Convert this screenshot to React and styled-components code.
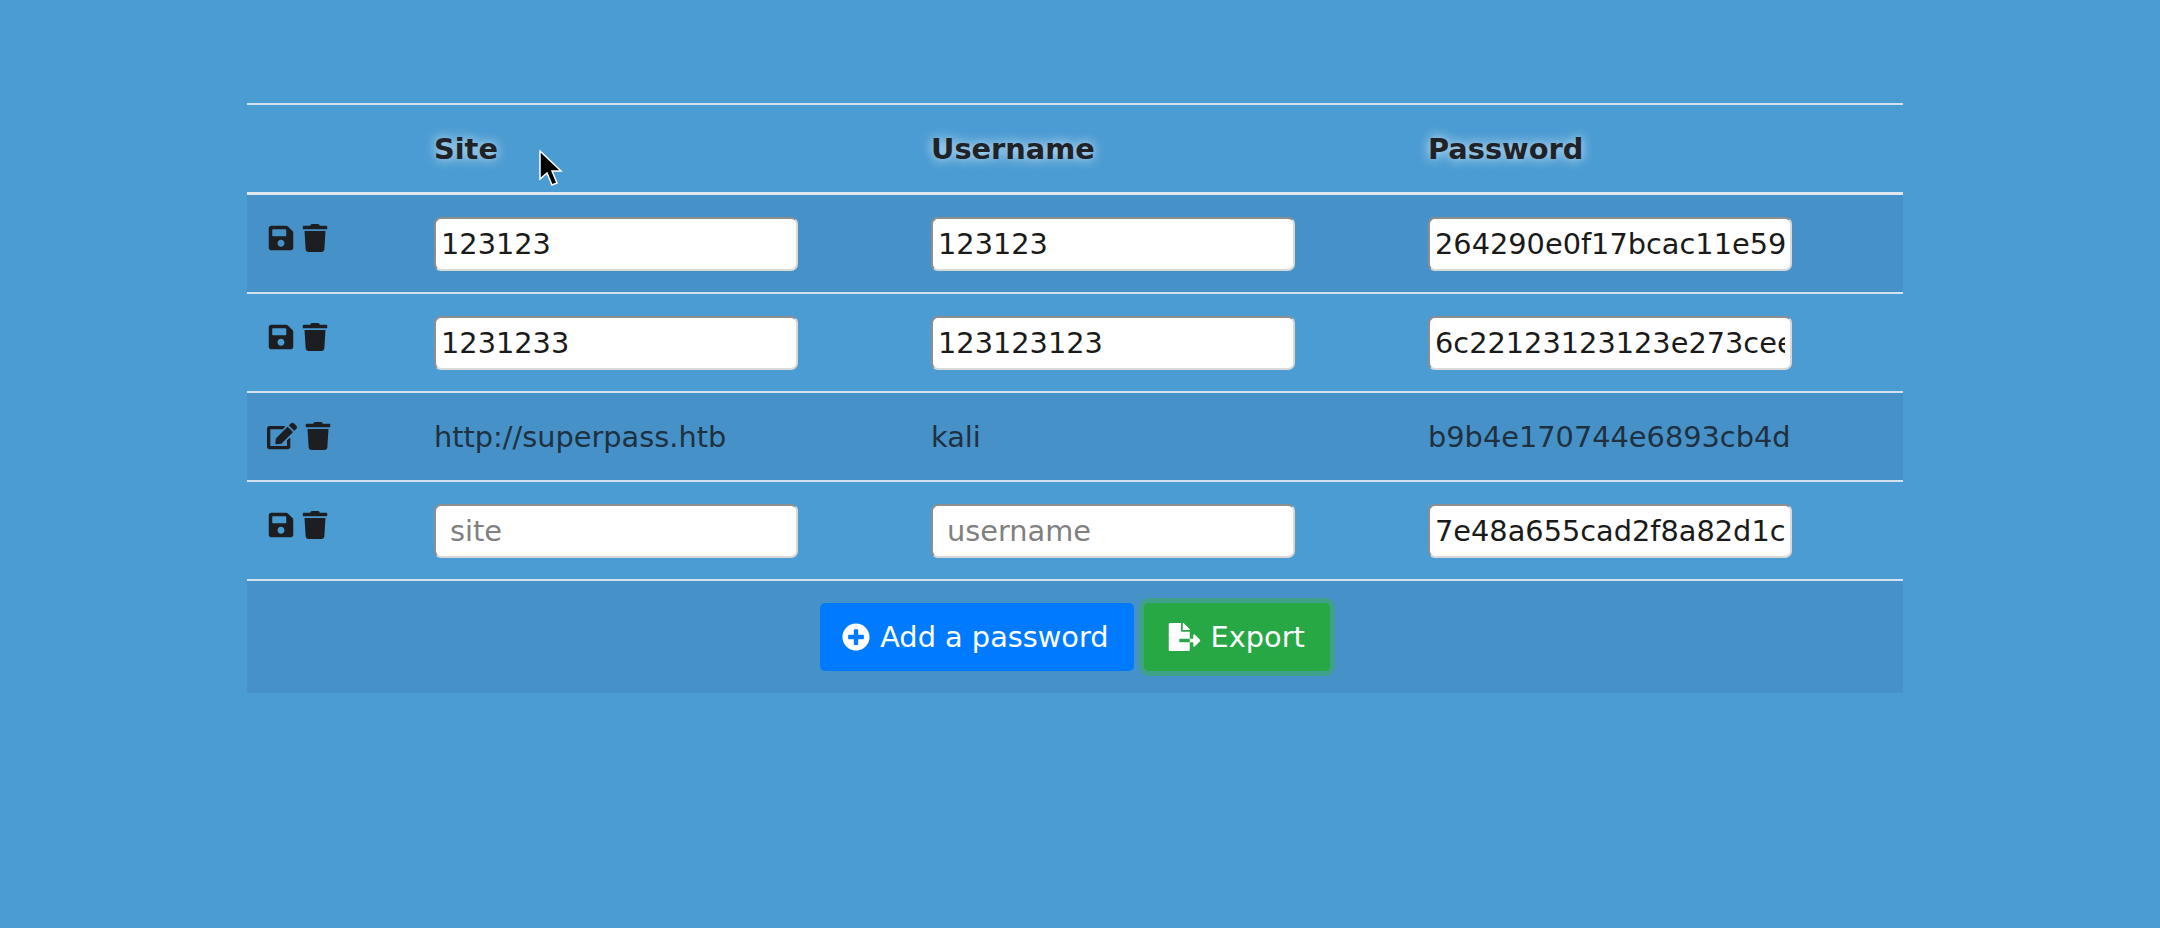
import React from 'react';
import styled, { createGlobalStyle } from 'styled-components';
import { FaSave, FaTrash, FaEdit, FaPlusCircle, FaFileExport } from 'react-icons/fa';

const GlobalStyle = createGlobalStyle`
    html, body {
        margin: 0;
        height: 100%;
        background: #4b9cd3;
    }
    body {
        font-family: "DejaVu Sans", Verdana, sans-serif;
        font-size: 28.8px;
        line-height: 33px;
        color: #212529;
    }
    #root {
        height: 100%;
    }
`;

const Page = styled.div`
    position: relative;
    min-height: 928px;
    padding: 103px 257px 0 247px;
    box-sizing: border-box;
    overflow: hidden;
`;

const Table = styled.table`
    width: 1656px;
    table-layout: fixed;
    border-collapse: collapse;
`;

const HeadCell = styled.th`
    text-align: left;
    font-weight: 700;
    padding: 28px 17px 26px;
    border-top: 2px solid #d3e2ee;
    border-bottom: 3px solid #dee7ee;
    color: #1f2327;
    text-shadow: 0 0 12px rgba(255, 255, 255, 0.85);
`;

const Row = styled.tr`
    background: ${p => (p.$striped ? '#4692c8' : 'transparent')};
`;

const Cell = styled.td`
    vertical-align: top;
    padding: ${p => (p.$editing ? '22px 17px 21px' : '28px 17px 26px')};
    border-top: 2px solid #d3e2ee;
    overflow: hidden;
    white-space: nowrap;
    color: ${p => (p.$editing ? '#212529' : '#1f3040')};
`;

const Actions = styled.td`
    vertical-align: top;
    padding: 29px 20px 0;
    border-top: 2px solid #d3e2ee;
    white-space: nowrap;
`;

const IconRow = styled.div`
    display: flex;
    align-items: flex-start;
    gap: 6px;
    font-size: 0;
    color: #1c1e21;

    svg {
        display: block;
        width: ${p => (p.$edit ? '30px' : '28px')};
        height: 28px;
    }
`;

const TextInput = styled.input`
    display: block;
    box-sizing: border-box;
    width: 364px;
    height: 54px;
    padding: 0 ${p => (p.$empty ? '14px' : '5px')};
    font-family: inherit;
    font-size: 28.8px;
    color: #1a1a1a;
    background: #fff;
    border: 2px solid #d9d9d9;
    border-top-color: #8e8e8e;
    border-left-color: #8e8e8e;
    border-radius: 7px;
    outline: none;

    &::placeholder {
        color: #808080;
        opacity: 1;
    }
`;

const FooterCell = styled.td`
    padding: 22px 0 22px;
    border-top: 2px solid #d3e2ee;
    text-align: center;
`;

const Buttons = styled.div`
    display: flex;
    justify-content: center;
    gap: 10px;
`;

const Button = styled.button`
    display: flex;
    align-items: center;
    gap: 10px;
    height: 68px;
    padding: 0 25px 0 ${p => (p.$variant === 'success' ? '24px' : '22px')};
    font-family: inherit;
    font-size: 28.8px;
    color: #fff;
    background: ${p => (p.$variant === 'success' ? '#28a745' : '#007bff')};
    border: 0;
    border-radius: 5px;
    box-shadow: ${p => (p.$variant === 'success' ? '0 0 0 5px rgba(60, 165, 115, 0.75)' : 'none')};

    svg {
        flex: none;
        width: ${p => (p.$variant === 'success' ? '33px' : '28px')};
        height: 28px;
    }
`;

const Cursor = styled.svg`
    position: absolute;
    left: 538px;
    top: 150px;
    width: 26px;
    height: 38px;
`;

const rows = [
    { site: '123123', username: '123123', password: '264290e0f17bcac11e59', striped: true },
    { site: '1231233', username: '123123123', password: '6c22123123123e273cee9a47d5e' },
    { site: 'http://superpass.htb', username: 'kali', password: 'b9b4e170744e6893cb4d', striped: true, saved: true },
    { site: '', username: '', password: '7e48a655cad2f8a82d1c' },
];

function App() {
    return (
        <Page>
            <GlobalStyle />
            <Table>
                <colgroup>
                    <col style={{ width: 170 }} />
                    <col style={{ width: 497 }} />
                    <col style={{ width: 497 }} />
                    <col style={{ width: 492 }} />
                </colgroup>
                <thead>
                    <tr>
                        <HeadCell />
                        <HeadCell>Site</HeadCell>
                        <HeadCell>Username</HeadCell>
                        <HeadCell>Password</HeadCell>
                    </tr>
                </thead>
                <tbody>
                    {rows.map((row, i) => (
                        <Row key={i} $striped={row.striped}>
                            <Actions>
                                <IconRow $edit={row.saved}>
                                    {row.saved ? <FaEdit /> : <FaSave />}
                                    <FaTrash />
                                </IconRow>
                            </Actions>
                            {row.saved ? (
                                <>
                                    <Cell>{row.site}</Cell>
                                    <Cell>{row.username}</Cell>
                                    <Cell>{row.password}</Cell>
                                </>
                            ) : (
                                <>
                                    <Cell $editing>
                                        <TextInput defaultValue={row.site} placeholder="site" $empty={!row.site} />
                                    </Cell>
                                    <Cell $editing>
                                        <TextInput defaultValue={row.username} placeholder="username" $empty={!row.username} />
                                    </Cell>
                                    <Cell $editing>
                                        <TextInput defaultValue={row.password} />
                                    </Cell>
                                </>
                            )}
                        </Row>
                    ))}
                    <Row $striped>
                        <FooterCell colSpan={4}>
                            <Buttons>
                                <Button><FaPlusCircle /> Add a password</Button>
                                <Button $variant="success"><FaFileExport /> Export</Button>
                            </Buttons>
                        </FooterCell>
                    </Row>
                </tbody>
            </Table>
            <Cursor viewBox="0 0 26 38">
                <path d="M2 1 L2 29 L9 23 L14 35 L19 33 L14 21 L23 21 Z" fill="#000" stroke="#fff" strokeWidth="1.5" />
            </Cursor>
        </Page>
    );
}

export default App;
